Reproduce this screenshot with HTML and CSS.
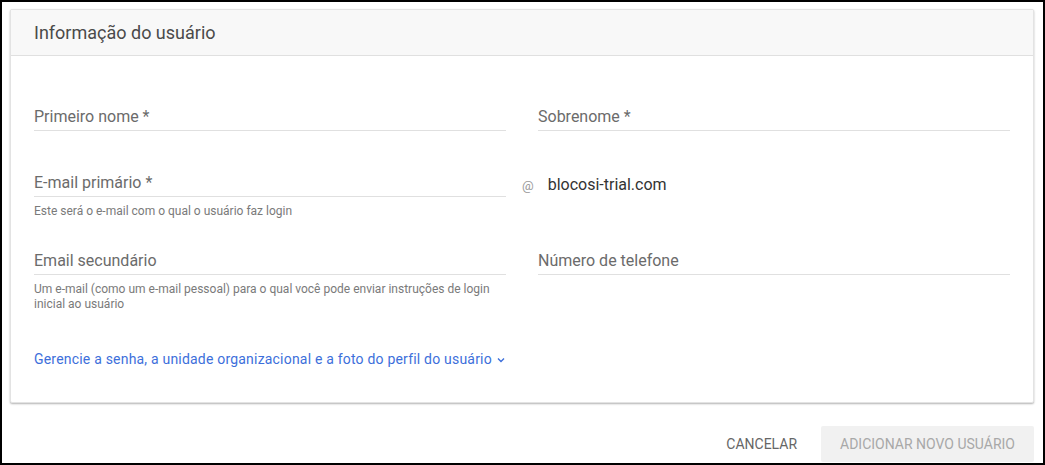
FILE: index.html
```html
<!DOCTYPE html>
<html lang="pt-BR">
<head>
    <meta charset="UTF-8">
    <meta name="viewport" content="width=device-width, initial-scale=1.0">
    <title>Informação do usuário</title>
    <link rel="stylesheet" href="styles.css">
</head>
<body>
    <div class="frame">
        <div class="card">
            <div class="card-header">Informação do usuário</div>

            <div class="card-body">
                <div class="row row-first">
                    <div class="field">
                        <div class="input">Primeiro nome *</div>
                    </div>
                    <div class="field">
                        <div class="input">Sobrenome *</div>
                    </div>
                </div>

                <div class="row row-email">
                    <div class="field field-fixed">
                        <div class="input">E-mail primário *</div>
                        <div class="hint">Este será o e-mail com o qual o usuário faz login</div>
                    </div>
                    <div class="domain">
                        <span class="at">@</span>
                        <span class="domain-name">blocosi-trial.com</span>
                    </div>
                </div>

                <div class="row">
                    <div class="field">
                        <div class="input">Email secundário</div>
                        <div class="hint">Um e-mail (como um e-mail pessoal) para o qual você pode enviar instruções de login inicial ao usuário</div>
                    </div>
                    <div class="field">
                        <div class="input">Número de telefone</div>
                    </div>
                </div>

                <a href="#" class="more-link">
                    Gerencie a senha, a unidade organizacional e a foto do perfil do usuário
                    <svg class="chevron" width="10" height="10" viewBox="0 0 10 10">
                        <path d="M2 3.5 L5 6.5 L8 3.5" fill="none" stroke="currentColor" stroke-width="1.4"/>
                    </svg>
                </a>
            </div>
        </div>

        <div class="actions">
            <button class="btn btn-text">Cancelar</button>
            <button class="btn btn-disabled">Adicionar novo usuário</button>
        </div>
    </div>
</body>
</html>
```

FILE: styles.css
```css
* {
    margin: 0;
    padding: 0;
    box-sizing: border-box;
}

body {
    font-family: Roboto, 'Noto Sans', Arial, sans-serif;
    background: #fff;
    color: #333;
}

.frame {
    width: 1045px;
    height: 465px;
    border: 2px solid #000;
    padding: 7px 9px 0 8px;
    overflow: hidden;
}

.card {
    background: #fff;
    border: 1px solid #e3e3e3;
    border-radius: 2px;
    box-shadow: 0 1px 2px rgba(0, 0, 0, 0.3);
}

.card-header {
    height: 46px;
    line-height: 46px;
    padding: 0 23px;
    background: #f8f8f8;
    border-bottom: 1px solid #e0e0e0;
    font-size: 18px;
    color: #4a4a4a;
}

.card-body {
    padding: 44px 23px 33px;
}

.row {
    display: flex;
    gap: 32px;
}

.row-first {
    margin-bottom: 35px;
}

.row-email {
    margin-bottom: 25px;
}

.field {
    flex: 1;
}

.field-fixed {
    flex: 0 0 472px;
}

.input {
    height: 31px;
    padding-top: 4px;
    line-height: 26px;
    border-bottom: 1px solid #e0e0e0;
    font-size: 16px;
    color: #6b6b6b;
}

.hint {
    margin-top: 7px;
    font-size: 12px;
    line-height: 15px;
    color: #7a7a7a;
}

.domain {
    margin-left: -16px;
    padding-top: 9px;
    line-height: 20px;
}

.at {
    font-size: 13px;
    color: #999;
    margin-right: 10px;
}

.domain-name {
    font-size: 16px;
    color: #333;
}

.more-link {
    display: inline-block;
    margin-top: 37px;
    font-size: 14px;
    letter-spacing: 0.2px;
    line-height: 20px;
    color: #3d6fdb;
    text-decoration: none;
}

.chevron {
    vertical-align: -1px;
}

.actions {
    display: flex;
    justify-content: flex-end;
    gap: 8px;
    margin-top: 23px;
}

.btn {
    height: 36px;
    padding: 0 16px;
    border: none;
    border-radius: 2px;
    font-family: inherit;
    font-size: 14px;
    text-transform: uppercase;
    background: transparent;
}

.btn-text {
    color: #666;
}

.btn-disabled {
    padding: 0 19px;
    background: #f1f1f1;
    color: #a8a8a8;
}
```
